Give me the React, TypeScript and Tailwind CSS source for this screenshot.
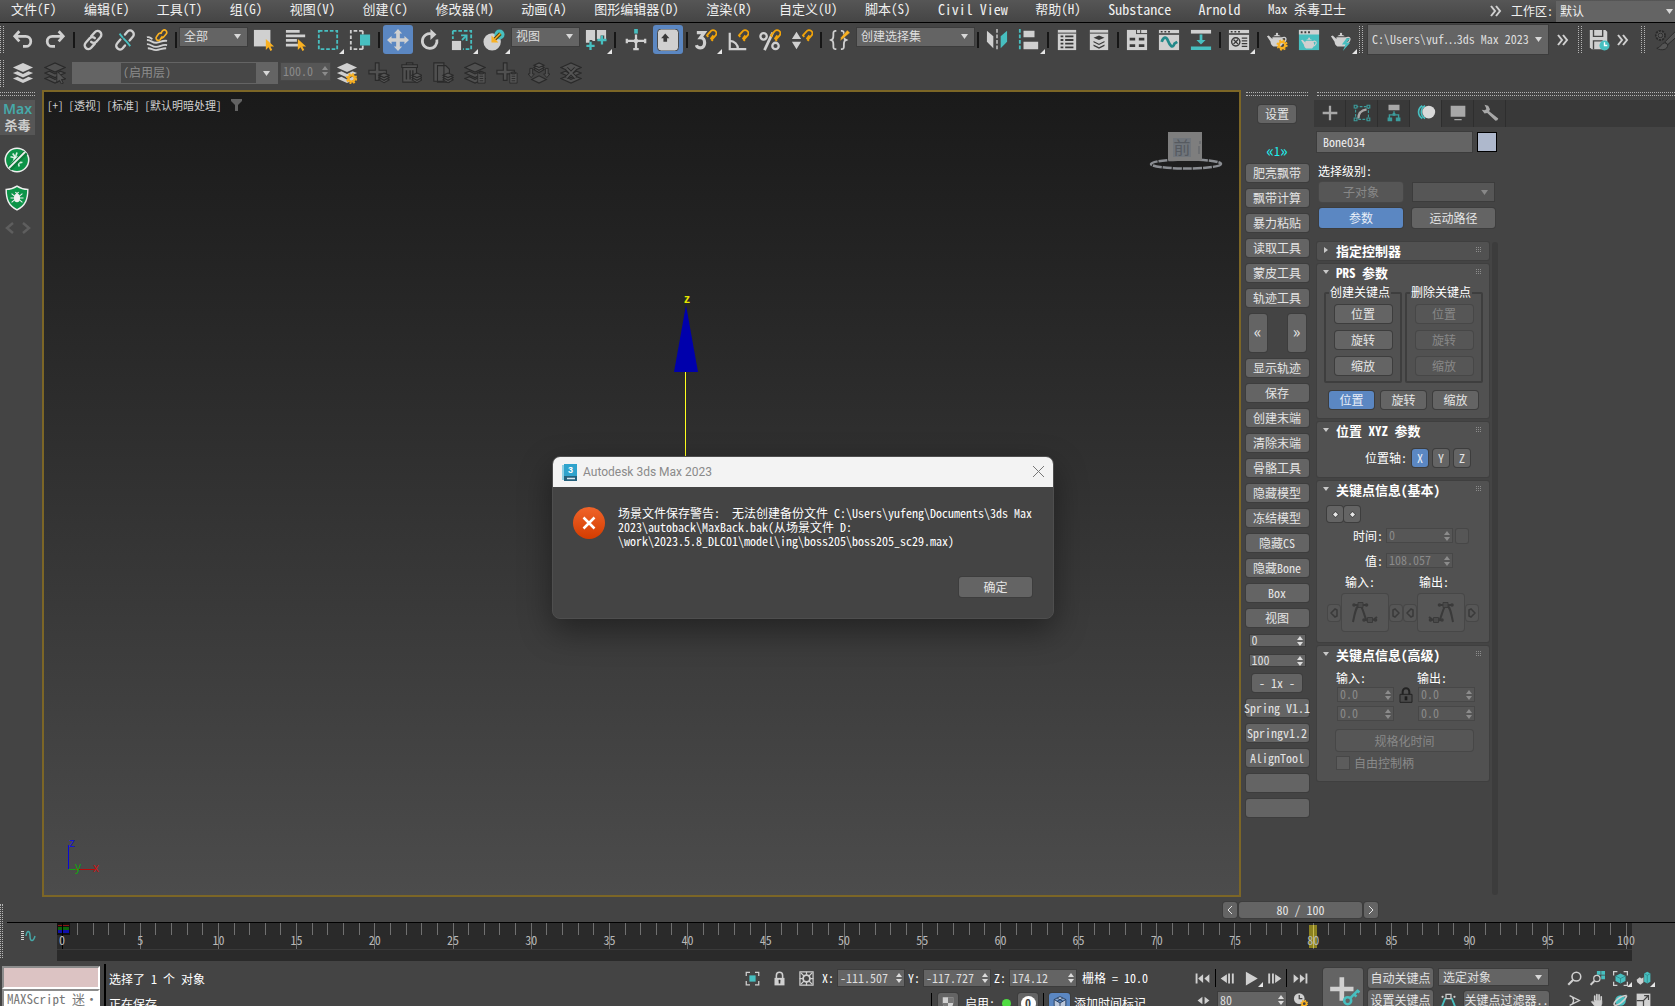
import React from 'react';
import type { ReactNode } from 'react';

const G = '#d0d0d0';
const T = '#47bfc0';
const Y = '#f9b122';
const D = '#2a2a2a';

const cx = (...parts: (string | false | undefined)[]) => parts.filter(Boolean).join(' ');

function Svg({ children, s = 24, className = '' }: { children: ReactNode; s?: number; className?: string }) {
  return (
    <svg width={s} height={s} viewBox="0 0 24 24" fill="none" className={cx('shrink-0', className)} aria-hidden="true">
      {children}
    </svg>
  );
}

const cursor = <path d="M14 11v12l3-3 2 4 2-1-2-4h4z" fill={Y} />;
const magnet = <path d="M13 7l4-4.500a3.500 3.500 0 0 1 5.500 4.500l-4 4.500M17 11l3-4M12.500 6.500l2 2M17.500 11l2 2" stroke="#f0a30a" strokeWidth="2" />;
const teapot = (
  <>
    <path d="M7 9h10c3 3 2 8-1 10H8c-2-1-3-3-3-5L1 8l2-1 4 4zM8 8c1-2 7-2 8 0z" fill={G} />
    <circle cx="12" cy="5.500" r="1.300" fill={G} />
    <path d="M17 10c5-3 7 2 1 6" stroke={G} strokeWidth="1.500" />
  </>
);
const Gear = ({ x, y }: { x: number; y: number }) => (
  <g transform={`translate(${x} ${y})`}>
    <circle r="3.500" stroke={Y} strokeWidth="2.500" />
    <circle r="5.200" stroke={Y} strokeWidth="1.800" strokeDasharray="2.100 2" />
  </g>
);
const stack = (f: string, st?: string) => (
  <g fill={f} stroke={st} strokeWidth="1.200">
    <path d="M1 18l5-2 6 3 6-3 5 2-11 5z" />
    <path d="M1 12l5-2 6 3 6-3 5 2-11 5z" />
    <path d="M1 6l11-5 11 5-11 5z" />
  </g>
);
const miniStack = (x: number, y: number) => (
  <g transform={`translate(${x} ${y})`} fill="#555" stroke={D} strokeWidth="1.200">
    <path d="M0 7.500l5.500 3 5.500-3-2-1.500H2z" />
    <path d="M0 5l5.500 3 5.500-3-2-1.500H2z" />
    <path d="M0 2.500L5.500 0 11 2.500 5.500 5z" />
  </g>
);
const clip = (x: number, y: number) => (
  <g transform={`translate(${x} ${y})`}>
    <path d="M0 1h8v11H0zM2 0h4v2H2z" fill="#555" stroke={D} />
    <path d="M2 4.500h4M2 7h4M2 9.500h4" stroke={D} />
  </g>
);

const I: Record<string, ReactNode> = {
  undo: <path d="M3 8h12a5 5 0 0 1 0 11h-3M8 2.500L3 8l5 5.500" stroke={G} strokeWidth="3" />,
  redo: <path d="M21 8H9a5 5 0 0 0 0 11h3M16 2.500L21 8l-5 5.500" stroke={G} strokeWidth="3" />,
  link: (
    <g stroke={G} strokeWidth="2.600" strokeLinecap="round">
      <path d="M10 8l4-4.500a4 4 0 0 1 6 5.500l-4.500 5a4 4 0 0 1-5.500 0" />
      <path d="M14 16l-4 4.500a4 4 0 0 1-6-5.500l4.500-5a4 4 0 0 1 5.500 0" />
    </g>
  ),
  unlink: (
    <>
      <g stroke={G} strokeWidth="2.600" strokeLinecap="round">
        <path d="M12 6l2.500-3a4 4 0 0 1 6 5.500L17 12.500" />
        <path d="M12 18l-2.500 3a4 4 0 0 1-6-5.500L7 11.500" />
      </g>
      <path d="M6 5l4 5M14 14l4 5M10 10l4 4" stroke={T} strokeWidth="2" strokeDasharray="6 3" />
    </>
  ),
  bind: (
    <>
      <g stroke={G} strokeWidth="2">
        <path d="M1 12c5 0 5 3 10 3s6-3 12-2M1 16.500c5 0 5 3 10 3s6-3 12-2M2 21c4 0 5 2 9 2s6-2 11-2M1 9c3-1 4 1 6 2" />
      </g>
      <g stroke={Y} strokeWidth="1.800">
        <path d="M16 5l2-3a2.500 2.500 0 0 1 4 3.500L19 9a2.500 2.500 0 0 1-3 .500" />
        <path d="M18 8l-2.500 3.500a2.500 2.500 0 0 1-4-3L14 5a2.500 2.500 0 0 1 3 0" />
      </g>
    </>
  ),
  select: (
    <>
      <path d="M1 1h18v18H1z" fill={G} />
      {cursor}
    </>
  ),
  selectName: (
    <>
      <path d="M1 1h15v3H1zM1 6h21v3H1zM1 11h12v3H1zM1 16h14v3H1z" fill={G} />
      {cursor}
    </>
  ),
  region: <path d="M2 2h20v20H2z" stroke={T} strokeWidth="2" strokeDasharray="4 2" />,
  crossing: (
    <>
      <path d="M15 2H2v20h13M15 2v4M15 18v4" stroke={G} strokeWidth="2" strokeDasharray="4 2" />
      <path d="M12 6h11v12H12z" fill={T} />
    </>
  ),
  move: (
    <path d="M12 0l4.500 5H14v5h5V7.500l5 4.500-5 4.500V14h-5v5h2.500L12 24l-4.500-5H10v-5H5v2.500L0 12l5-4.500V10h5V5H7.500z" fill={G} />
  ),
  rotate: (
    <>
      <path d="M14 5.500a8 8 0 1 0 5.500 6" stroke={G} strokeWidth="3" />
      <path d="M12.500 0l6.500 6-6.500 6z" fill={G} />
    </>
  ),
  scale: (
    <>
      <path d="M2 2h20v20h-9M2 2v9" stroke={T} strokeWidth="2" strokeDasharray="4 2" />
      <path d="M1 13h10v10H1z" fill={G} />
      <path d="M11 7h6v6" stroke={T} strokeWidth="2" />
      <path d="M17 7l-5 5" stroke={T} strokeWidth="2" />
    </>
  ),
  place: (
    <>
      <circle cx="10" cy="14" r="9.500" fill={G} />
      <circle cx="18" cy="6" r="5.500" fill={T} />
      <path d="M19 5l-7 7" stroke="#5a4410" strokeWidth="4" />
      <path d="M19 5l-6 6M10 9v5h5z" stroke={Y} strokeWidth="1.500" fill={Y} />
    </>
  ),
  pivot: (
    <>
      <path d="M1 1h10v12H8v-1H5v3H1zM13 1h10v10h-2V7h-4v4h-4z" fill={G} />
      <path d="M6 14v9M1.500 18.500h9M18.500 7v10M13.500 12h10" stroke={T} strokeWidth="2.500" />
    </>
  ),
  manipulate: (
    <>
      <path d="M12 6v17M1 13h22M9 22h6M2 10.500v5M22 10.500v5" stroke={G} strokeWidth="2.500" />
      <path d="M10 0h4v5h-4z" fill={T} />
      <circle cx="12" cy="13" r="2.500" fill={G} />
    </>
  ),
  override: (
    <>
      <rect x="0.500" y="0" width="23" height="24" rx="4" fill={G} stroke="#3d3d3d" />
      <path d="M9 5l4.500 5H11v4H7v-4H4.500z" fill="#3a3a3a" />
    </>
  ),
  snap3: (
    <>
      <path d="M2 4h8l-4 5.500c6 0 6 11 0 11-2.500 0-4-1-4.500-3" stroke={G} strokeWidth="3.500" />
      {magnet}
    </>
  ),
  angle: (
    <>
      <path d="M3 4v18h18M3 13c5 0 9 4 9 9" stroke={G} strokeWidth="2.400" />
      {magnet}
    </>
  ),
  percent: (
    <>
      <circle cx="5" cy="8" r="3.500" stroke={G} strokeWidth="2.500" />
      <circle cx="18" cy="18.500" r="3.500" stroke={G} strokeWidth="2.500" />
      <path d="M15 4L6 23" stroke={G} strokeWidth="3" />
      {magnet}
    </>
  ),
  spinSnap: (
    <>
      <path d="M1 11l5-8 5 8zM1 14h10l-5 8z" fill={G} />
      {magnet}
    </>
  ),
  braces: (
    <>
      <path d="M8 2H7C3 2 6 8 4 11l-2 1 2 1c2 3-1 9 3 9h1M13 2h1c4 0 1 6 3 9l2 1-2 1c-2 3 1 9-3 9h-1" stroke={G} strokeWidth="2" />
      <path d="M12 13l1-4 7-8 3 3-8 7z" fill={Y} stroke="#444" strokeWidth="0.500" />
    </>
  ),
  mirror: (
    <>
      <path d="M1 2l7 6v13l-7-7z" fill={G} />
      <path d="M23 2l-7 6v13l7-7z" fill={T} />
      <path d="M12 0v24" stroke={G} strokeWidth="1.500" strokeDasharray="4 2" />
    </>
  ),
  align: (
    <>
      <path d="M2 0v24" stroke={T} strokeWidth="2" strokeDasharray="4 2" />
      <path d="M6 2h12v7H6zM6 14h16v8H6z" fill={G} />
    </>
  ),
  listBox: (
    <>
      <path d="M2 1h20v22H2z" fill={G} />
      <path d="M5 8h3M10 8h9M5 12h3M10 12h9M5 16h3M10 16h9M5 20h3M10 20h9" stroke="#3a3a3a" strokeWidth="2" />
      <path d="M2 4.500h20" stroke="#3a3a3a" />
    </>
  ),
  layerBox: (
    <>
      <path d="M2 1h20v22H2z" fill={G} />
      <path d="M2 4.500h20" stroke="#3a3a3a" />
      <path d="M6 9.500L12 7l6 2.500-6 2.500zM6 13l6 3 6-3v1.500l-6 3-6-3zM6 17l6 3 6-3v1.500l-6 3-6-3z" fill="#3a3a3a" />
    </>
  ),
  ribbon: (
    <>
      <path d="M1 1h22v22H1z" fill={G} />
      <path d="M11.500 1v4M16 1v4M11 5h12" stroke="#3a3a3a" />
      <path d="M4 11h6M14 11h6M4 18h6M14 18h6" stroke="#3a3a3a" strokeWidth="3" />
    </>
  ),
  curve: (
    <>
      <path d="M1 1h22v22H1z" fill={G} />
      <path d="M1 5.500h22M3 3h2M7 3h2M11 3h2" stroke="#3a3a3a" strokeWidth="1.500" />
      <path d="M4 14c2-6 5-6 7-1s5 9 7 3l3-2" stroke="#22898a" strokeWidth="3" />
    </>
  ),
  schematic: (
    <>
      <path d="M1 1h22v4H1z" fill={G} />
      <path d="M1 19h22v4H1zM10.500 6h3v6h3.500l-5 5-5-5h3.500z" fill={T} />
    </>
  ),
  material: (
    <>
      <path d="M1 1h22v22H1z" fill={G} />
      <path d="M1 5.500h22M3 3h2M7 3h2M11 3h2" stroke="#3a3a3a" strokeWidth="1.500" />
      <circle cx="8.500" cy="14" r="4.500" stroke="#3a3a3a" strokeWidth="1.500" />
      <path d="M6 11.500l5 5M11 11.500l-5 5M15 10h6M15 13h6M15 16h6M15 19h6" stroke="#3a3a3a" strokeWidth="1.500" />
    </>
  ),
  renderSetup: (
    <>
      {teapot}
      <Gear x={17.500} y={17.500} />
    </>
  ),
  renderFrame: (
    <>
      <path d="M1 1h22v22H1z" fill={T} />
      <path d="M1 1h22v5H1z" fill={G} />
      <path d="M3 3.500h2M7 3.500h2M11 3.500h2" stroke="#3a3a3a" strokeWidth="2" />
      <g transform="translate(2.500 6) scale(.8)">{teapot}</g>
    </>
  ),
  render: (
    <>
      {teapot}
      <path d="M18 10l-5 7h4l-3 7 8-9h-4l4-5z" fill={T} />
    </>
  ),
  save: (
    <>
      <path d="M2 1h17l2 2v19H4l-2-2z" fill={G} />
      <path d="M6 1v7h10V1M6 22v-9h10" stroke="#444" strokeWidth="1.500" />
      <circle cx="18" cy="18" r="5.500" fill={T} />
      <path d="M18 14.500V18h3" stroke="#fff" strokeWidth="1.500" />
    </>
  ),
  brush: (
    <g stroke={D} fill="#555">
      <circle cx="7" cy="7" r="5" strokeDasharray="2.500 1" strokeWidth="2" />
      <circle cx="7" cy="7" r="2.500" />
      <path d="M24 2L12 14l3 3L24 9zM12 15c-4 0-4 5-9 6 5 3 12 2 12-4z" />
    </g>
  ),
  layers: <g>{stack(G)}</g>,
  layersSel: (
    <>
      {stack('#505050', D)}
      <path d="M14 10v12l3-2 2 4 2-1-2-4h4z" fill="#555" stroke={D} />
    </>
  ),
  layersGear: (
    <>
      {stack(G)}
      <Gear x={17} y={18} />
    </>
  ),
  layerAdd: (
    <>
      <path d="M8 1h4v8h8v4h-8v7H8v-7H1V9h7z" fill="#505050" stroke={D} strokeWidth="1.200" />
      {miniStack(12, 12)}
    </>
  ),
  layerDel: (
    <>
      <path d="M3 6h15v16H3zM2 3h17v3H2zM7 1h7v2H7z" fill="#505050" stroke={D} strokeWidth="1.200" />
      <path d="M7 9v10M11 9v10M14 9v10" stroke={D} strokeWidth="1.500" />
      {miniStack(13, 12)}
    </>
  ),
  layerCopy: (
    <>
      <path d="M2 1h11v20H2zM6 4h9l4 4v14H6z" fill="#505050" stroke={D} strokeWidth="1.200" />
      {miniStack(12, 12)}
    </>
  ),
  layerPaste: (
    <>
      {stack('#505050', D)}
      {clip(15, 11)}
    </>
  ),
  layerAddClip: (
    <>
      <path d="M8 1h4v8h8v4h-8v7H8v-7H1V9h7z" fill="#505050" stroke={D} strokeWidth="1.200" />
      {clip(15, 11)}
    </>
  ),
  layerIn: (
    <>
      <path d="M5 7H2v6H0l3.500 4L7 13H5zM19 7h3v6h2l-3.500 4-3.500-4h2z" fill="#505050" stroke={D} />
      {miniStack(6.500, 1)}
      <path d="M4 19l8-4 8 4-8 4z" fill="#505050" stroke={D} strokeWidth="1.200" />
    </>
  ),
  layerX: (
    <>
      {stack('#505050', D)}
      <path d="M7 7l10 10M17 7L7 17" stroke={D} strokeWidth="4" />
      <path d="M7 7l10 10M17 7L7 17" stroke="#555" strokeWidth="2" />
    </>
  ),
  isolate: (
    <>
      <path d="M2 8V2h6M16 2h6v6M22 16v6h-6M8 22H2v-6" stroke={G} strokeWidth="2" />
      <path d="M7 7h10v10H7z" fill={T} />
    </>
  ),
  lock: (
    <>
      <path d="M4 11h16v12H4z" fill={G} />
      <path d="M7 11V7a5 5 0 0 1 10 0v4" stroke={G} strokeWidth="2.500" />
      <path d="M12 14v6M10.500 15.500h3" stroke="#333" strokeWidth="2.500" />
    </>
  ),
  absMode: (
    <>
      <path d="M1.500 1.500h21v21h-21z" stroke={G} strokeWidth="2" />
      <circle cx="12" cy="12" r="5.500" stroke={G} strokeWidth="3" />
      <path d="M12 1v5M12 18v5M1 12h5M18 12h5M3 3l5 5M21 3l-5 5M3 21l5-5M21 21l-5-5" stroke={G} strokeWidth="2" />
    </>
  ),
  first: <path d="M1 4h3v16H1zM13 5v14l-8-7zM23 5v14l-8-7z" fill={G} />,
  last: <path d="M20 4h3v16h-3zM11 5v14l8-7zM1 5v14l8-7z" fill={G} />,
  prev: <path d="M11 5v14L1 12zM13 4h3v16h-3zM19 4h3v16h-3z" fill={G} />,
  next: <path d="M13 5v14l10-7zM8 4h3v16H8zM2 4h3v16H2z" fill={G} />,
  play: <path d="M3 1v22l19-11z" fill={G} />,
  keyMode: <path d="M10 5v14l-9-7zM14 5v14l9-7z" fill={G} />,
  clock: (
    <>
      <circle cx="10" cy="9" r="8.500" fill={G} />
      <path d="M10 3v6h5" stroke="#444" strokeWidth="2" />
      <Gear x={18} y={17} />
    </>
  ),
  zoom: (
    <>
      <circle cx="15" cy="9" r="7" stroke={G} strokeWidth="2.500" />
      <path d="M10 14l-8 8" stroke={G} strokeWidth="3.500" />
    </>
  ),
  zoomAll: (
    <>
      <path d="M11 0h6v6h-6zM18 0h6v6h-6zM18 7h6v6h-6z" fill={T} />
      <circle cx="11" cy="12" r="5" stroke={G} strokeWidth="2" />
      <path d="M7 16l-6 6" stroke={G} strokeWidth="3" />
    </>
  ),
  extents: (
    <>
      <path d="M1 7V1h6M17 1h6v6M23 17v6h-6M7 23H1v-6" stroke={G} strokeWidth="2" />
      <path d="M4 8l8-4 8 4v8l-8 4-8-4z" fill={T} />
      <path d="M4 8l8 4 8-4M12 12v8" stroke="#2a7777" />
    </>
  ),
  extentsAll: (
    <>
      <path d="M13 4l5-3 5 3v13l-5 3-5-3z" fill={T} />
      <path d="M13 4l5 3 5-3M18 7v12" stroke="#2a7777" />
      <path d="M1 14l5-4 3 2 3-2v8l-5 4-5-4z" fill={G} />
    </>
  ),
  fov: <path d="M3 3l18 9L3 21M8 6c3 4 3 8 0 12" stroke={G} strokeWidth="2.500" />,
  hand: (
    <g stroke={G} strokeLinecap="round">
      <path d="M7.500 12V5M11 11V2.500M14.500 11V3M18 12V6" strokeWidth="2.600" />
      <path d="M7 12h12v5l-2 6H9l-3-4-4-5 2-1 3 2z" fill={G} />
    </g>
  ),
  orbit: (
    <>
      <circle cx="12" cy="12" r="8.500" fill={T} />
      <path d="M2 19C6 22 20 12 22 4M2 19c-2-5 10-15 20-15" stroke={G} strokeWidth="2.500" />
    </>
  ),
  maximize: (
    <>
      <path d="M1 1h22v22H1z" fill={G} />
      <path d="M1 12h11v11M11 13l9-9M13 4h7v7" stroke="#444" strokeWidth="2" />
    </>
  ),
  shade: (
    <>
      <path d="M3 2h18v10c0 6-5 9-9 11-4-2-9-5-9-11z" fill={G} />
      <path d="M12 2v10h9V2zM3 12h9v11c-4-2-9-5-9-11z" fill="#777" />
    </>
  ),
  box: (
    <path d="M12 1l10 5v11l-10 6-10-6V6zM2 6l10 6 10-6M12 12v11M7 3.500l10 6M17 3.500l-10 6" stroke="#223a5c" strokeWidth="1.500" fill="#b9c5d8" />
  ),
  tangent: (
    <>
      <path d="M7 8L1 23M17 8l6 15" stroke={T} strokeWidth="3" />
      <path d="M8 2h8v7H8z" stroke={G} strokeWidth="2" />
      <circle cx="2.500" cy="6" r="1.800" fill={G} />
      <circle cx="21.500" cy="6" r="1.800" fill={G} />
    </>
  ),
  bigKey: (
    <>
      <path d="M9 2h4v8h8v4h-8v8H9v-8H1v-4h8z" fill={G} />
      <circle cx="16" cy="22" r="3" stroke={T} strokeWidth="2.200" />
      <path d="M18 20l7-7M21 16l2.500 2.500M24 13l2 2" stroke={T} strokeWidth="2.200" />
    </>
  ),
};

function VHandle({ className = '' }: { className?: string }) {
  return <div className={cx('h-[27px] w-1 shrink-0 border-x border-dotted border-[#b4b4b4]', className)} />;
}
function HHandle({ className = '' }: { className?: string }) {
  return <div className={cx('h-1 shrink-0 border-y border-dotted border-[#b4b4b4]', className)} />;
}
function Sep() {
  return (
    <div className="flex w-[6px] shrink-0 justify-center">
      <div className="h-4 w-[2px] bg-[#161616]" />
    </div>
  );
}
function Corner() {
  return (
    <svg width="5" height="5" viewBox="0 0 5 5" className="absolute right-0 bottom-0" aria-hidden="true">
      <path d="M5 0v5H0z" fill="#e6e6e6" />
    </svg>
  );
}
function Tool({ icon, label, active, corner }: { icon: string; label: string; active?: boolean; corner?: boolean }) {
  return (
    <button
      type="button"
      aria-label={label}
      className={cx(
        'relative flex h-[29px] shrink-0 items-center justify-center',
        active ? 'mx-px w-[30px] rounded-[3px] bg-[#5b87c2]' : 'w-8'
      )}
    >
      <Svg s={22}>{I[icon]}</Svg>
      {corner && <Corner />}
    </button>
  );
}
function Arrow({ className = '', fill = '#d8d8d8' }: { className?: string; fill?: string }) {
  return (
    <svg width="7" height="5" viewBox="0 0 7 5" className={cx('pointer-events-none', className)} aria-hidden="true">
      <path d="M0 0h7L3.500 5z" fill={fill} />
    </svg>
  );
}
function Combo({ text, label, className, disabled }: { text: string; label: string; className: string; disabled?: boolean }) {
  return (
    <div className={cx('relative flex shrink-0 items-center border border-[#3c3c3c]', disabled ? 'bg-[#565656]' : 'bg-[#646464]', className)}>
      <select aria-label={label} disabled={disabled} className="h-full w-full appearance-none bg-transparent pb-px pl-1 text-[#dedede] outline-none">
        <option>{text}</option>
      </select>
      <Arrow className="absolute right-[6px]" fill={disabled ? '#888' : '#d8d8d8'} />
    </div>
  );
}
function Arrows({ dim }: { dim?: boolean }) {
  return (
    <svg width="6" height="10" viewBox="0 0 6 10" className="mr-[2px] shrink-0" aria-hidden="true">
      <path d="M0 4l3-4 3 4zM0 6h6l-3 4z" fill={dim ? '#8c8c8c' : '#dcdcdc'} />
    </svg>
  );
}
function Spin({ value, label, className, dim }: { value: string; label: string; className: string; dim?: boolean }) {
  return (
    <div
      className={cx(
        'flex shrink-0 items-center overflow-hidden border',
        dim ? 'border-[#474747] bg-[#565656] text-[#8a8a8a]' : 'border-[#3c3c3c] bg-[#646464] text-[#dedede]',
        className
      )}
    >
      <input aria-label={label} defaultValue={value} disabled={dim} className="w-0 min-w-0 flex-1 bg-transparent pb-[2px] pl-[2px] outline-none" />
      <Arrows dim={dim} />
    </div>
  );
}
function Btn({ children, className = '', active, dim, label }: { children?: ReactNode; className?: string; active?: boolean; dim?: boolean; label?: string }) {
  return (
    <button
      type="button"
      aria-label={label}
      disabled={dim}
      className={cx(
        'flex shrink-0 items-center justify-center rounded-[3px] whitespace-nowrap',
        dim ? 'shadow-[0_0_0_1px_#474747]' : 'shadow-[0_0_0_1px_#3d3d3d]',
        active && 'bg-[#5b87c2] text-[#e8eef8]',
        dim && 'bg-[#565656] text-[#888]',
        !active && !dim && 'bg-[#646464] text-[#e4e4e4]',
        className
      )}
    >
      {children}
    </button>
  );
}
function Chevrons({ className = '' }: { className?: string }) {
  return (
    <svg width="12" height="12" viewBox="0 0 12 12" fill="none" className={cx('shrink-0', className)} aria-hidden="true">
      <path d="M1 1l4 5-4 5M6 1l4 5-4 5" stroke={G} strokeWidth="2" />
    </svg>
  );
}

const MENUS = [
  '文件(F)', '编辑(E)', '工具(T)', '组(G)', '视图(V)', '创建(C)', '修改器(M)', '动画(A)', '图形编辑器(D)',
  '渲染(R)', '自定义(U)', '脚本(S)', 'Civil View', '帮助(H)', 'Substance', 'Arnold', 'Max 杀毒卫士',
];

function MenuBar() {
  return (
    <nav className="flex h-[23px] shrink-0 items-center overflow-hidden border-b border-black bg-gradient-to-b from-[#565656] to-[#454545] text-[13px] whitespace-nowrap text-[#f0f0f0]">
      <div className="flex w-[1346px] justify-between pb-1 pl-[11px]">
        {MENUS.map((m) => (
          <button key={m} type="button" className={cx('leading-4', /^[A-Z][^杀]*$/.test(m) && 'text-sm leading-4')}>
            {m}
          </button>
        ))}
      </div>
      <div className="ml-auto flex items-center text-xs">
        <Chevrons />
        <label htmlFor="workspace" className="mr-[3px] ml-[9px]">工作区:</label>
        <div className="relative flex h-[21px] w-[119px] items-center bg-[#646464]">
          <select id="workspace" className="h-full w-full appearance-none bg-transparent pl-1 outline-none">
            <option>默认</option>
          </select>
          <Arrow className="absolute right-[2px]" />
        </div>
      </div>
    </nav>
  );
}

function MainToolbar() {
  return (
    <div className="flex h-[33px] shrink-0 items-center overflow-hidden">
      <VHandle className="mr-[3px]" />
      <Tool icon="undo" label="Undo" />
      <Tool icon="redo" label="Redo" />
      <Sep />
      <Tool icon="link" label="Link" />
      <Tool icon="unlink" label="Unlink" />
      <Tool icon="bind" label="Bind to space warp" />
      <Sep />
      <Combo text="全部" label="Selection filter" className="mb-[6px] h-5 w-[69px]" />
      <Tool icon="select" label="Select object" />
      <Tool icon="selectName" label="Select by name" />
      <Tool icon="region" label="Selection region" corner />
      <Tool icon="crossing" label="Window crossing" />
      <Sep />
      <Tool icon="move" label="Move" active />
      <Tool icon="rotate" label="Rotate" />
      <Tool icon="scale" label="Scale" corner />
      <Tool icon="place" label="Place" corner />
      <Combo text="视图" label="Reference coordinates" className="mb-[6px] ml-px h-5 w-[69px]" />
      <Tool icon="pivot" label="Pivot" corner />
      <Sep />
      <div className="flex pl-[2px]">
        <Tool icon="manipulate" label="Manipulate" />
        <Tool icon="override" label="Keyboard override" active />
      </div>
      <Sep />
      <Tool icon="snap3" label="Snap" corner />
      <Tool icon="angle" label="Angle snap" />
      <Tool icon="percent" label="Percent snap" />
      <Tool icon="spinSnap" label="Spinner snap" />
      <Sep />
      <Tool icon="braces" label="Edit selection sets" />
      <Combo text="创建选择集" label="Selection set" className="mb-[6px] h-5 w-[119px]" />
      <Sep />
      <Tool icon="mirror" label="Mirror" />
      <Tool icon="align" label="Align" corner />
      <Sep />
      <Tool icon="listBox" label="Scene explorer" />
      <Tool icon="layerBox" label="Layer explorer" />
      <Sep />
      <Tool icon="ribbon" label="Ribbon" />
      <Tool icon="curve" label="Curve editor" />
      <Tool icon="schematic" label="Schematic view" />
      <Sep />
      <Tool icon="material" label="Material editor" corner />
      <Sep />
      <Tool icon="renderSetup" label="Render setup" />
      <Tool icon="renderFrame" label="Rendered frame" />
      <Tool icon="render" label="Render" corner />
      <VHandle className="mr-1 ml-[2px]" />
      <Combo text="C:\Users\yuf…3ds Max 2023" label="Project folder" className="h-[31px] w-[182px]" />
      <Chevrons className="mr-[9px] ml-2" />
      <VHandle className="mr-px" />
      <Tool icon="save" label="Autosave" />
      <Chevrons className="mr-3 ml-[2px]" />
      <VHandle className="mr-1" />
      <Tool icon="brush" label="Paint" />
    </div>
  );
}

function LayerToolbar() {
  return (
    <div className="flex h-[34px] shrink-0 items-center overflow-hidden">
      <VHandle className="mr-[3px]" />
      <Tool icon="layers" label="Layers" />
      <Tool icon="layersSel" label="Select layer" />
      <div className="relative ml-px flex h-[22px] w-[206px] shrink-0 items-center bg-[#646464]">
        <select aria-label="Layer" className="mr-[22px] ml-[49px] h-5 flex-1 appearance-none bg-[#474747] pb-[2px] pl-[2px] text-[#8c8c8c] outline-none">
          <option>(启用层)</option>
        </select>
        <Arrow className="absolute right-2" />
      </div>
      <Spin value="100.0" label="Layer weight" className="mb-1 ml-[2px] h-[19px] w-[51px]" dim />
      <Tool icon="layersGear" label="Layer settings" />
      <Tool icon="layerAdd" label="Add layer" />
      <Tool icon="layerDel" label="Delete layer" />
      <Tool icon="layerCopy" label="Copy layer" />
      <Tool icon="layerPaste" label="Paste active layer" />
      <Tool icon="layerAddClip" label="Paste new layer" />
      <Tool icon="layerIn" label="Collapse layer" />
      <Tool icon="layerX" label="Disable layer" />
    </div>
  );
}

function LeftBar() {
  return (
    <aside className="flex w-[42px] shrink-0 flex-col">
      <HHandle className="mt-[2px] w-[35px]" />
      <button type="button" className="mt-1 flex h-[35px] w-[35px] flex-col items-center justify-center bg-[#565656] pb-px text-sm leading-4 font-bold">
        <span className="font-['Noto_Sans'] font-semibold text-[#46a9a9]">Max</span>
        <span className="text-[13px] text-[#cfcfcf]">杀毒</span>
      </button>
      <button type="button" aria-label="Block virus" className="mt-3 ml-1 w-6">
        <Svg s={26}>
          <circle cx="12" cy="12" r="10.800" fill="#0d9448" stroke="#f0f0f0" strokeWidth="1.400" />
          <path d="M6 9l4 1M8 6l3 4M12 5l-1 3M18 9l-4 3M17 14l-4 1M9 13l-3 4M14 18l-1-4" stroke="#d8f0e0" strokeWidth="1.500" />
          <circle cx="12" cy="12" r="3.500" fill="#e8f6ec" />
          <path d="M5 20L20 5" stroke="#0d7a3a" strokeWidth="5" />
          <path d="M4.500 19.500L19.500 4.500" stroke="#f0f0f0" strokeWidth="1.800" />
        </Svg>
      </button>
      <button type="button" aria-label="Shield" className="mt-3 ml-1 w-6">
        <Svg s={26}>
          <path d="M12 1c3 2 6 3 10 3 0 9-2 15-10 19C4 19 2 13 2 4c4 0 7-1 10-3z" fill="#0d9448" stroke="#f0f0f0" strokeWidth="1.300" />
          <ellipse cx="12" cy="12" rx="2.800" ry="4" fill="#f0f0f0" />
          <path d="M7 8l3 2.500M17 8l-3 2.500M6 12h12M7 16l3-2.500M17 16l-3-2.500M10.500 6.500L12 8l1.500-1.500" stroke="#f0f0f0" />
        </Svg>
      </button>
      <svg width="26" height="14" viewBox="0 0 26 14" fill="none" className="mt-[10px] ml-[5px]" aria-hidden="true">
        <path d="M8 2L2 7l6 5M18 2l6 5-6 5" stroke="#5e5e5e" strokeWidth="2.500" />
      </svg>
    </aside>
  );
}

function Viewport() {
  return (
    <main className="relative min-w-0 flex-1 overflow-hidden border-2 border-[#7c6626] bg-gradient-to-b from-[#1a1a1a] to-[#4c4c4c]">
      <div className="flex items-center gap-[5px] pt-[5px] pl-[3px] text-[11px] leading-4 whitespace-pre text-[#cfcfcf]">
        <span>[+]</span>
        <span>[透视]</span>
        <span>[标准]</span>
        <span>[默认明暗处理]</span>
        <svg width="11" height="12" viewBox="0 0 11 12" className="ml-1" aria-hidden="true">
          <path d="M0 0h11v2L7 6v6H4V6L0 2z" fill="#636363" />
        </svg>
      </div>
      <svg width="40" height="190" viewBox="0 0 40 190" className="absolute top-[200px] left-[622px]" aria-label="Z axis gizmo">
        <path d="M19.500 80v110" stroke="#ffff1e" />
        <path d="M20 13l12 67H8z" fill="#0000ac" />
        <text x="21" y="11" textAnchor="middle" fontSize="12" fontWeight="bold" fill="#e6e600" fontFamily="Liberation Sans">z</text>
      </svg>
      <svg width="40" height="40" viewBox="0 0 40 40" className="absolute bottom-[18px] left-[22px]" aria-label="World axes">
        <g shapeRendering="crispEdges">
          <path d="M2.500 8v24" stroke="#0a0ad2" />
          <path d="M3 32.500h26" stroke="#b40a0a" />
          <path d="M3 32.500h7" stroke="#14a014" />
        </g>
        <g fontSize="12" fontFamily="Liberation Sans">
          <text x="3" y="10" fill="#1414d2">z</text>
          <text x="9" y="34" fill="#14a014">y</text>
          <text x="27" y="35" fill="#c81414">x</text>
        </g>
      </svg>
      <svg width="80" height="50" viewBox="0 0 80 50" className="absolute top-[36px] right-[13px]" aria-label="View cube">
        <ellipse cx="40" cy="36" rx="35" ry="4.500" fill="none" stroke="#8a8d92" strokeWidth="2.500" strokeDasharray="9 1" />
        <path d="M22 4h34v28l-3 1H24l-2-1z" fill="#7e7e7e" />
        <path d="M27 10h18v19H27z" fill="#70757b" />
        <text x="36" y="26" textAnchor="middle" fontSize="17" fill="#565a60" fontFamily="Noto Sans CJK SC">前</text>
        <path d="M54 13v3M53 18v8" stroke="#5c6066" />
      </svg>
    </main>
  );
}

const SCRIPTS_A = ['肥亮飘带', '飘带计算', '暴力粘贴', '读取工具', '蒙皮工具', '轨迹工具'];
const SCRIPTS_B = ['显示轨迹', '保存', '创建末端', '清除末端', '骨骼工具', '隐藏模型', '冻结模型', '隐藏CS', '隐藏Bone', 'Box', '视图'];
const SCRIPTS_C = ['Spring V1.1', 'Springv1.2', 'AlignTool', '', ''];

function ScriptColumn() {
  return (
    <aside className="flex w-[72px] shrink-0 flex-col items-center">
      <HHandle className="mt-[2px] w-[62px]" />
      <Btn className="mt-[9px] h-[18px] w-[38px]">设置</Btn>
      <div className="mt-5 flex h-4 items-center text-[#1ff0f0]">
        <span className="pb-[2px] text-base leading-4">«</span>
        <span>1</span>
        <span className="pb-[2px] text-base leading-4">»</span>
      </div>
      <div className="mt-[5px] flex flex-col items-center gap-[7px]">
        {SCRIPTS_A.map((s) => (
          <Btn key={s} className="h-[18px] w-[63px]">{s}</Btn>
        ))}
        <div className="flex gap-[21px]">
          <Btn className="h-[38px] w-[18px] pb-1 text-base leading-4">«</Btn>
          <Btn className="h-[38px] w-[18px] pb-1 text-base leading-4">»</Btn>
        </div>
        {SCRIPTS_B.map((s) => (
          <Btn key={s} className="h-[18px] w-[63px]">{s}</Btn>
        ))}
        <Spin value="0" label="Start" className="h-[13px] w-[57px]" />
        <Spin value="100" label="End" className="h-[13px] w-[57px]" />
        <Btn className="h-[18px] w-[50px]">－ 1x －</Btn>
        {SCRIPTS_C.map((s, i) => (
          <Btn key={i} label={s || 'Empty slot'} className="h-[18px] w-[63px]">{s}</Btn>
        ))}
      </div>
    </aside>
  );
}

function Rollout({ title, closed, children }: { title: string; closed?: boolean; children?: ReactNode }) {
  return (
    <section className="rounded-[2px] bg-[#515151] shadow-[0_0_0_1px_#3f3f3f]">
      <button type="button" className="flex h-[18px] w-full items-center pb-[2px] text-[13px] leading-none font-bold text-white">
        <svg width="6" height="6" viewBox="0 0 6 6" className="mr-[7px] ml-[6px]" aria-hidden="true">
          <path d={closed ? 'M1 0l4 3-4 3z' : 'M0 1h6L3 5z'} fill="#c8c8c8" />
        </svg>
        {title}
        <svg width="6" height="6" viewBox="0 0 6 6" className="mr-[7px] ml-auto" aria-hidden="true">
          <path d="M0 .500h6M0 2.500h6M0 4.500h6" stroke="#8c8c8c" strokeDasharray="1 1" />
        </svg>
      </button>
      {children}
    </section>
  );
}

function KeyGroup({ title, dim }: { title: string; dim?: boolean }) {
  return (
    <fieldset className="flex w-[78px] flex-col items-center rounded-[2px] border-2 border-[#3e3e3e] pb-[6px] text-white">
      <legend className="ml-[3px] h-[14px] px-px leading-3">{title}</legend>
      <div className="flex flex-col gap-2 pt-[5px]">
        {['位置', '旋转', '缩放'].map((t) => (
          <Btn key={t} dim={dim} className="h-[18px] w-[57px]">{t}</Btn>
        ))}
      </div>
    </fieldset>
  );
}

function TangentKnob({ flip }: { flip?: boolean }) {
  return (
    <Btn dim label={flip ? 'Out tangent' : 'In tangent'} className="h-[37px] w-[46px]">
      <svg width="26" height="22" viewBox="0 0 26 22" fill="none" className={flip ? '-scale-x-100' : ''} aria-hidden="true">
        <path d="M1 20C3 10 4 5 7 3c4 0 5 12 8 16M2 3h13M11 18h10l4-3" stroke="#3a3a3a" strokeWidth="2" />
        <circle cx="2" cy="3" r="1.800" fill="#3a3a3a" />
        <circle cx="14.500" cy="3" r="1.800" fill="#3a3a3a" />
        <path d="M6 .500h5v5H6zM15.500 15.500h5v5h-5z" fill="#4a4a4a" stroke="#3a3a3a" />
        <circle cx="12" cy="18" r="1.800" fill="#3a3a3a" />
        <circle cx="23.500" cy="18" r="1.800" fill="#3a3a3a" />
      </svg>
    </Btn>
  );
}
function SmallKnob({ left }: { left?: boolean }) {
  return (
    <Btn dim label={left ? 'Previous' : 'Next'} className="h-4 w-[12px]">
      <svg width="8" height="10" viewBox="0 0 8 10" fill="none" className={left ? '-scale-x-100' : ''} aria-hidden="true">
        <path d="M1 2l2-1 4 4-4 4-2-1z" stroke="#3a3a3a" strokeWidth="1.500" />
      </svg>
    </Btn>
  );
}

const TABS: { name: string; icon: ReactNode }[] = [
  { name: 'Create', icon: <path d="M12 4v16M4 12h16" stroke="#a8a8a8" strokeWidth="2.500" /> },
  {
    name: 'Modify',
    icon: (
      <>
        <path d="M5 5h14v14H5z" stroke="#3c9c9c" strokeWidth="1.200" strokeDasharray="3 1.500" />
        <path d="M8 18c0-6 3-9 9-10" stroke="#a8a8a8" strokeWidth="2.500" />
        <path d="M3.500 3.500h3v3h-3zM17.500 3.500h3v3h-3zM3.500 17.500h3v3h-3zM17.500 17.500h3v3h-3z" stroke="#3c9c9c" strokeWidth="1.200" fill="#393939" />
      </>
    ),
  },
  {
    name: 'Hierarchy',
    icon: (
      <>
        <path d="M6 3h12v6H6z" fill="#a8a8a8" />
        <path d="M12 10v4M7 18v-4h10v4" stroke="#3c9c9c" strokeWidth="1.500" />
        <path d="M5 17h5v4H5zM14 17h5v4h-5zM10.500 12h3v3h-3z" fill="#3c9c9c" />
      </>
    ),
  },
  {
    name: 'Motion',
    icon: (
      <>
        <path d="M8 4a8 8 0 0 0 0 14M11 4a8 8 0 0 0 0 14" stroke={T} strokeWidth="1.800" />
        <circle cx="15" cy="11" r="7" fill="#dadada" />
      </>
    ),
  },
  { name: 'Display', icon: <path d="M4 4h16v12H4zM8 18.500h8v1.500H8z" fill="#a8a8a8" /> },
  {
    name: 'Utilities',
    icon: <path d="M6 3l4 1 2 4-1 2L21 18l-1 2-2 .500L9 12l-3 .500-3-4 3 .500 2-1-.500-2z" fill="#a8a8a8" />,
  },
];

function CommandPanel() {
  return (
    <aside className="flex w-[362px] shrink-0 flex-col overflow-hidden">
      <HHandle className="mt-[2px] ml-1" />
      <div role="tablist" className="mt-1 ml-px flex h-[27px] shrink-0 bg-[#393939]">
        {TABS.map((t) => (
          <button
            key={t.name}
            type="button"
            role="tab"
            aria-label={t.name}
            aria-selected={t.name === 'Motion'}
            className={cx('flex w-8 items-center justify-center border-r border-[#2e2e2e] pb-[2px]', t.name === 'Motion' && 'bg-[#444]')}
          >
            <Svg s={22}>{t.icon}</Svg>
          </button>
        ))}
      </div>
      <div className="flex min-h-0 flex-1 flex-col pl-1">
        <div className="mt-[5px] flex h-5 shrink-0 gap-[5px]">
          <input aria-label="Object name" defaultValue="Bone034" className="w-[155px] bg-[#646464] pb-[2px] pl-[6px] text-[#ededed] shadow-[0_0_0_1px_#3c3c3c] outline-none" />
          <button type="button" aria-label="Object colour" className="w-5 border border-black bg-[#aeb8cc]" />
        </div>
        <div className="mt-[11px] mb-[3px] h-4 shrink-0 pl-px leading-4 text-white">选择级别:</div>
        <div className="grid shrink-0 grid-cols-[84px_83px] gap-x-[9px] gap-y-[6px] pl-[2px]">
          <Btn dim className="h-5">子对象</Btn>
          <Combo text="" label="Sub-object" className="h-5" disabled />
          <Btn active className="h-5">参数</Btn>
          <Btn className="h-5">运动路径</Btn>
        </div>
        <div className="mt-[14px] flex min-h-0 flex-1 gap-[3px]">
          <div className="flex w-[172px] flex-col gap-1">
            <Rollout title="指定控制器" closed />
            <Rollout title="PRS 参数">
              <div className="mt-1 flex gap-[3px] pl-[7px]">
                <KeyGroup title="创建关键点" />
                <KeyGroup title="删除关键点" dim />
              </div>
              <div className="mt-2 flex gap-[7px] pb-[9px] pl-3">
                <Btn active className="h-[18px] w-[45px]">位置</Btn>
                <Btn className="h-[18px] w-[45px]">旋转</Btn>
                <Btn className="h-[18px] w-[45px]">缩放</Btn>
              </div>
            </Rollout>
            <Rollout title="位置 XYZ 参数">
              <div className="mt-[9px] flex items-center justify-end gap-[5px] pr-[19px] pb-[10px] text-white">
                <span>位置轴:</span>
                <Btn active className="h-[18px] w-4">X</Btn>
                <Btn className="h-[18px] w-4">Y</Btn>
                <Btn className="h-[18px] w-4">Z</Btn>
              </div>
            </Rollout>
            <Rollout title="关键点信息(基本)">
              <div className="mt-[7px] flex gap-px pl-[10px]">
                {['Previous key', 'Next key'].map((k) => (
                  <Btn key={k} label={k} className="h-4 w-4">
                    <svg width="7" height="7" viewBox="0 0 7 7" aria-hidden="true">
                      <path d="M3.500 0l3.500 3.500L3.500 7 0 3.500z" fill="#444" />
                      <path d="M3.500 1L6 3.500 3.500 6 1 3.500z" fill="#e8e8e8" />
                    </svg>
                  </Btn>
                ))}
              </div>
              <div className="mt-[6px] flex items-center gap-[3px] text-white">
                <label htmlFor="key-lock" className="w-[66px] text-right leading-[15px]">时间:</label>
                <Spin value="0" label="时间" className="h-[15px] w-[67px]" dim />
                <input id="key-lock" type="checkbox" disabled className="h-[14px] w-[12px] appearance-none rounded-[2px] bg-[#565656] shadow-[0_0_0_1px_#474747]" />
              </div>
              <div className="mt-[10px] flex items-center gap-[3px] text-white">
                <span className="w-[66px] text-right leading-[15px]">值:</span>
                <Spin value="108.057" label="值" className="h-[15px] w-[67px]" dim />
              </div>
              <div className="mt-[7px] flex pl-[28px] leading-[14px] text-white">
                <span className="w-[74px]">输入:</span>
                <span>输出:</span>
              </div>
              <div className="mt-[5px] flex items-center gap-[2px] pb-[11px] pl-[11px]">
                <SmallKnob left />
                <TangentKnob />
                <SmallKnob />
                <SmallKnob left />
                <TangentKnob flip />
                <SmallKnob />
              </div>
            </Rollout>
            <Rollout title="关键点信息(高级)">
              <div className="mt-[7px] flex pl-[19px] leading-[14px] text-white">
                <span className="w-[81px]">输入:</span>
                <span>输出:</span>
              </div>
              <div className="mt-[2px] flex h-[15px] items-center pl-5">
                <Spin value="0.0" label="输入" className="h-[15px] w-[57px]" dim />
                <Svg s={16} className="mx-1">
                  <path d="M3 11h18v12H3z" fill="#4a4a4a" stroke="#222" strokeWidth="1.500" />
                  <path d="M7 11V7a5 5 0 0 1 10 0v4" stroke="#222" strokeWidth="3" />
                  <path d="M12 14v6" stroke="#1c1c1c" strokeWidth="4" />
                </Svg>
                <Spin value="0.0" label="输出" className="h-[15px] w-[57px]" dim />
              </div>
              <div className="mt-1 flex gap-6 pl-5">
                <Spin value="0.0" label="输入 2" className="h-[15px] w-[57px]" dim />
                <Spin value="0.0" label="输出 2" className="h-[15px] w-[57px]" dim />
              </div>
              <Btn dim className="mt-[9px] ml-[19px] h-[21px] w-[137px]">规格化时间</Btn>
              <label className="mt-[6px] flex items-center gap-[5px] pb-[12px] pl-5 leading-3 text-[#8a8a8a]">
                <input type="checkbox" disabled className="h-3 w-3 appearance-none bg-[#5c5c5c] shadow-[0_0_0_1px_#474747]" />
                自由控制柄
              </label>
            </Rollout>
          </div>
          <div className="mb-[2px] w-[6px] rounded-full bg-[#3c3c3c]" />
        </div>
      </div>
    </aside>
  );
}

function Timeline() {
  const start = 5;
  const span = 1564;
  const total = 1575;
  const pct = (n: number) => `${((start + (n / 100) * span) / total) * 100}%`;
  return (
    <svg className="h-[38px] min-w-0 flex-1 overflow-visible bg-[#2a2a2a]" role="img" aria-label="Time ruler">
      <g shapeRendering="crispEdges">
        <line x1="0" x2="100%" y1="26" y2="26" stroke="#3a3a3a" />
        <rect x="0" y="0" width="13" height="12" fill="#101010" />
        <rect x="1" y="2" width="11" height="1" fill="#8c1414" />
        <rect x="1" y="4" width="11" height="3" fill="#0c640c" />
        <rect x="1" y="7" width="11" height="3" fill="#1010aa" />
        {Array.from({ length: 101 }, (_, n) => (
          <line key={n} x1={pct(n)} x2={pct(n)} y1="0" y2={n % 5 === 0 ? 26 : 12} stroke={n === 0 ? '#000' : '#707070'} />
        ))}
        <svg x={pct(80)} y="2" overflow="visible">
          <rect x="-4" y="0" width="8" height="23" fill="#8b8120" />
          <line x1="0" x2="0" y1="0" y2="23" stroke="#c8bc50" />
        </svg>
      </g>
      {Array.from({ length: 21 }, (_, i) => (
        <text key={i} x={pct(i * 5)} y="22" textAnchor="middle" fontSize="12" fill="#b9b9b9">
          {i * 5}
        </text>
      ))}
    </svg>
  );
}

function TrackArea() {
  return (
    <div className="flex h-16 shrink-0">
      <div className="flex w-[7px] shrink-0">
        <div className="mt-[7px] mb-[3px] w-[3px] border-x border-dotted border-[#b4b4b4]" />
      </div>
      <div className="flex min-w-0 flex-1 flex-col">
        <div className="flex h-[25px] shrink-0 items-center justify-end gap-[2px] pr-[297px]">
          <Btn label="Previous frame" className="h-4 w-[14px]">
            <svg width="6" height="10" viewBox="0 0 6 10" fill="none"><path d="M5 1L1 5l4 4" stroke="#e4e4e4" /></svg>
          </Btn>
          <Btn className="h-4 w-[123px]">80 / 100</Btn>
          <Btn label="Next frame" className="h-4 w-[14px]">
            <svg width="6" height="10" viewBox="0 0 6 10" fill="none"><path d="M1 1l4 4-4 4" stroke="#e4e4e4" /></svg>
          </Btn>
        </div>
        <div className="flex flex-1 border-t border-black pr-[43px]">
          <button type="button" aria-label="Mini curve editor" className="flex w-[50px] shrink-0 items-center pb-3 pl-[14px]">
            <svg width="15" height="12" viewBox="0 0 15 12" fill="none">
              <path d="M1.500 1v10" stroke={G} strokeWidth="3" strokeDasharray="1 1" />
              <path d="M5 6c1-7 4-5 4 0s3 7 5 0" stroke="#46a9a9" strokeWidth="1.500" />
            </svg>
          </button>
          <Timeline />
        </div>
      </div>
    </div>
  );
}

function Small({ icon, label, className, s = 15, corner }: { icon: string; label: string; className: string; s?: number; corner?: boolean }) {
  return (
    <button type="button" aria-label={label} className={cx('relative flex shrink-0 items-center justify-center', className)}>
      <Svg s={s}>{I[icon]}</Svg>
      {corner && <Corner />}
    </button>
  );
}

function StatusBar() {
  return (
    <footer className="flex h-[45px] shrink-0 items-start overflow-hidden whitespace-nowrap text-white">
      <div className="mt-[5px] ml-[2px] flex w-[98px] shrink-0 flex-col">
        <input aria-label="MAXScript output" className="h-[23px] w-full border-2 border-[#8c8c8c] border-r-white border-b-white bg-[#dcc3c3]" />
        <input
          aria-label="MAXScript listener"
          defaultValue="MAXScript 迷·"
          className="h-[23px] w-full border-2 border-[#8c8c8c] border-r-white bg-white pb-1 pl-[3px] text-[13px] text-[#777]"
        />
      </div>
      <div className="mt-[3px] ml-1 h-12 w-[2px] shrink-0 bg-black" />
      <div className="flex min-w-0 flex-1 flex-col gap-[9px] pt-[10px] pl-[3px] leading-4">
        <span>选择了 1 个 对象</span>
        <span>正在保存...</span>
      </div>

      <div className="mt-2 flex w-[450px] shrink-0 flex-col">
        <div className="flex h-[18px] items-center">
          <Small icon="isolate" label="Isolate" className="w-[27px]" />
          <Small icon="lock" label="Selection lock" className="w-[27px]" />
          <Small icon="absMode" label="Absolute mode" className="w-[27px]" />
          <div className="flex items-center gap-[3px] pl-[2px]">
            <span>X:</span>
            <Spin value="-111.507" label="X" className="h-[18px] w-[68px]" />
            <span>Y:</span>
            <Spin value="-117.727" label="Y" className="h-[18px] w-[68px]" />
            <span>Z:</span>
            <Spin value="174.12" label="Z" className="h-[18px] w-[68px]" />
            <span className="pl-[2px]">栅格 = 10.0</span>
          </div>
        </div>
        <div className="mt-[6px] flex h-5 items-center pl-[192px]">
          <div className="mr-[6px] h-5 w-px shrink-0 bg-black" />
          <Btn label="Shade" className="h-5 w-5"><Svg s={14}>{I.shade}</Svg></Btn>
          <span className="mx-[7px]">启用:</span>
          <span className="mr-[7px] h-[9px] w-[9px] shrink-0 rounded-full bg-[#4fdc41]" />
          <Btn className="h-5 w-5">
            <span className="flex h-[15px] w-[15px] items-center justify-center rounded-full bg-white font-bold text-[#444]">0</span>
          </Btn>
          <div className="mx-[5px] h-5 w-px shrink-0 bg-black" />
          <Btn active label="Degradation" className="h-5 w-[21px]"><Svg s={14}>{I.box}</Svg></Btn>
          <span className="pl-1">添加时间标记</span>
        </div>
      </div>

      <div className="mt-2 flex w-[124px] shrink-0 flex-col gap-1">
        <div className="flex h-[18px]">
          <Small icon="first" label="First frame" className="w-[26px]" />
          <Small icon="prev" label="Previous frame" className="w-6 border-l border-black" />
          <Small icon="play" label="Play" className="w-6" corner />
          <Small icon="next" label="Next frame" className="w-6 border-r border-black" />
          <Small icon="last" label="Last frame" className="w-[26px]" />
        </div>
        <div className="flex h-[18px] items-center">
          <Small icon="keyMode" label="Key mode" className="w-[28px]" s={13} />
          <Spin value="80" label="Current frame" className="h-[18px] w-[70px]" />
          <Small icon="clock" label="Time configuration" className="w-[26px]" />
        </div>
      </div>

      <div className="mt-[7px] ml-[10px] flex shrink-0 gap-[5px]">
        <Btn label="Set keys" className="h-[50px] w-10"><Svg s={28} className="mb-2 overflow-visible">{I.bigKey}</Svg></Btn>
        <div className="flex flex-col gap-[2px]">
          <Btn className="h-5 w-[65px]">自动关键点</Btn>
          <Btn className="h-5 w-[65px]">设置关键点</Btn>
        </div>
        <div className="flex w-[111px] flex-col gap-[5px]">
          <Combo text="选定对象" label="Key target" className="h-[18px]" />
          <div className="flex items-center justify-between">
            <Small icon="tangent" label="Default tangent" className="w-[20px]" />
            <Btn className="h-[18px] w-[85px]">关键点过滤器..</Btn>
          </div>
        </div>
      </div>

      <div className="mt-2 mr-5 ml-[14px] grid shrink-0 grid-cols-[repeat(4,23px)] gap-y-1">
        <Small icon="zoom" label="Zoom" className="h-[18px]" />
        <Small icon="zoomAll" label="Zoom all" className="h-[18px]" />
        <Small icon="extents" label="Zoom extents" className="h-[18px]" corner />
        <Small icon="extentsAll" label="Zoom extents all" className="h-[18px]" corner />
        <Small icon="fov" label="Field of view" className="h-[18px]" s={13} />
        <Small icon="hand" label="Pan" className="h-[18px]" />
        <Small icon="orbit" label="Orbit" className="h-[18px]" />
        <Small icon="maximize" label="Maximize viewport" className="h-[18px]" />
      </div>
    </footer>
  );
}

function AlertDialog() {
  return (
    <div
      role="alertdialog"
      aria-label="Autodesk 3ds Max 2023"
      className="absolute top-[456px] left-[552px] w-[502px] overflow-hidden rounded-lg border border-[#4e4e4e] bg-[#444] text-white shadow-[0_12px_32px_rgba(0,0,0,0.4)]"
    >
      <div className="flex h-[30px] items-center bg-[#f3f3f3] px-[9px] font-['Roboto'] text-xs text-[#8a8a8a]">
        <svg width="15" height="17" viewBox="0 0 15 17" className="mr-[6px]" aria-hidden="true">
          <path d="M0 1h3v15H0z" fill="#8fd0e4" />
          <path d="M2 0h13v17H2z" fill="#2fa3cc" />
          <path d="M2 12h13v5H2z" fill="#24617c" />
          <text x="8.500" y="9" textAnchor="middle" fontSize="9" fontWeight="bold" fill="#fff" fontFamily="Liberation Sans">3</text>
          <path d="M5 14.500h8" stroke="#d8e8f0" strokeWidth="1.500" />
        </svg>
        <span>Autodesk 3ds Max 2023</span>
        <button type="button" aria-label="Close" className="ml-auto pb-[2px]">
          <svg width="11" height="11" viewBox="0 0 11 11">
            <path d="M0 0l11 11M11 0L0 11" stroke="#777" />
          </svg>
        </button>
      </div>
      <div className="flex pt-5 pl-5">
        <svg width="32" height="32" viewBox="0 0 32 32" className="mr-[13px] shrink-0" aria-hidden="true">
          <defs>
            <linearGradient id="err" x1="0" y1="0" x2="0" y2="1">
              <stop offset="0" stopColor="#f0642a" />
              <stop offset="1" stopColor="#d33c00" />
            </linearGradient>
          </defs>
          <circle cx="16" cy="16" r="16" fill="url(#err)" />
          <path d="M10.500 10.500l11 11M21.500 10.500l-11 11" stroke="#fff" strokeWidth="2.500" />
        </svg>
        <p className="-mt-px leading-[14px] whitespace-pre">
          {'场景文件保存警告:  无法创建备份文件 C:\\Users\\yufeng\\Documents\\3ds Max\n2023\\autoback\\MaxBack.bak(从场景文件 D:\n\\work\\2023.5.8_DLC01\\model\\ing\\boss205\\boss205_sc29.max)'}
        </p>
      </div>
      <div className="flex justify-end pt-[29px] pr-[21px] pb-[21px]">
        <Btn className="h-5 w-[73px]">确定</Btn>
      </div>
    </div>
  );
}

export default function App() {
  return (
    <div className="relative flex h-screen flex-col overflow-hidden bg-[#444] font-['Noto_Sans_CJK_SC',sans-serif] text-xs leading-none [font-feature-settings:'hwid']">
      <MenuBar />
      <MainToolbar />
      <LayerToolbar />
      <div className="flex min-h-0 flex-1">
        <LeftBar />
        <Viewport />
        <ScriptColumn />
        <CommandPanel />
      </div>
      <TrackArea />
      <StatusBar />
      <AlertDialog />
    </div>
  );
}
